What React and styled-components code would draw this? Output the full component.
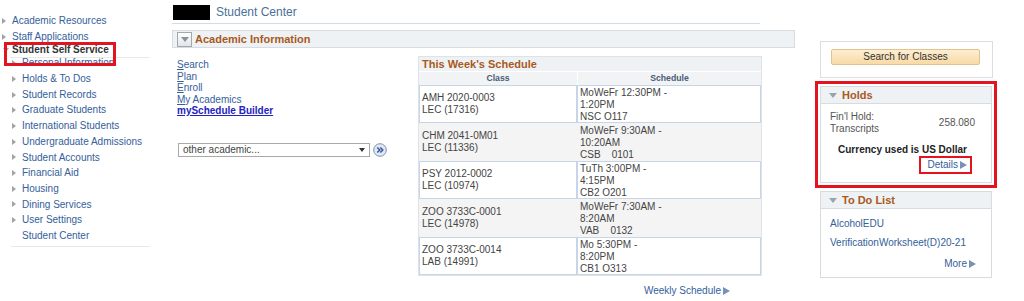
import React from 'react'
import styled, { createGlobalStyle } from 'styled-components'

const LINK = '#34609a'
const ORANGE = '#a9591c'
const RED = '#e3141f'

const GlobalStyle = createGlobalStyle`
  html, body { margin: 0; padding: 0; background: #fff; }
  body {
    font-family: "Liberation Sans", Arial, sans-serif;
    font-size: 10px;
    color: #333;
  }
  * { box-sizing: border-box; }
`

const Page = styled.div`
  display: flex;
  align-items: flex-start;
  width: 1024px;
  height: 301px;
  overflow: hidden;
`

/* ---------- left menu ---------- */

const Nav = styled.nav`
  width: 160px;
  padding-top: 13px;
`

const NavItem = styled.div`
  display: flex;
  align-items: center;
  height: 15.7px;
  line-height: 15.7px;
  padding-left: ${p => (p.$sub ? 12 : 2)}px;
  color: ${LINK};
  white-space: nowrap;
`

const RightTri = styled.span`
  width: 0;
  height: 0;
  margin-right: 6px;
  border-left: 4px solid #a3a3a3;
  border-top: 3.5px solid transparent;
  border-bottom: 3.5px solid transparent;
  visibility: ${p => (p.$hidden ? 'hidden' : 'visible')};
`

const SelfService = styled.div`
  position: relative;
  display: flex;
  align-items: center;
  height: 11px;
  line-height: 15.7px;
  padding-left: 3px;
  font-weight: bold;
  color: #333;
  white-space: nowrap;

  &::before {
    content: '';
    position: absolute;
    left: 10px;
    right: 10px;
    top: 13px;
    border-top: 1px solid #e9e9e9;
  }
  &::after {
    content: '';
    position: absolute;
    left: 4px;
    top: -2px;
    width: 106px;
    height: 18px;
    border: 3px solid ${RED};
  }
`

const DownTri = styled.span`
  width: 0;
  height: 0;
  margin-right: 3px;
  margin-top: 1px;
  border-top: 4px solid #a3a3a3;
  border-left: 3.5px solid transparent;
  border-right: 3.5px solid transparent;
`

const NavRule = styled.div`
  margin: 2px 10px 0 11px;
  border-top: 1px solid #e8e8e8;
`

/* ---------- main column ---------- */

const Main = styled.main`
  width: 623px;
  margin-left: 12px;
  padding-top: 5px;
`

const TitleRow = styled.div`
  display: flex;
  align-items: center;
  gap: 6px;
  height: 15px;
  padding-left: 1px;
`

const Redacted = styled.span`
  width: 37px;
  height: 15px;
  background: #000;
`

const PageTitle = styled.h1`
  margin: 0;
  font-size: 12px;
  font-weight: normal;
  line-height: 15px;
  color: #4d6f96;
`

const TitleRule = styled.div`
  width: 588px;
  height: 1px;
  margin-top: 3px;
  background: #d8dbde;
`

const SectionBar = styled.div`
  display: flex;
  align-items: center;
  gap: 3px;
  height: 18px;
  margin-top: 6px;
  padding-left: 4px;
  border: 1px solid #d7dce0;
  background: #eef2f5;
`

const CollapseBox = styled.span`
  display: flex;
  align-items: center;
  justify-content: center;
  width: 15px;
  height: 15px;
  border: 1px solid #a2a8ae;
  background: linear-gradient(#ffffff, #e2e5e8);
`

const BoxTri = styled.span`
  width: 0;
  height: 0;
  border-top: 5px solid #8d9297;
  border-left: 4.5px solid transparent;
  border-right: 4.5px solid transparent;
`

const SectionTitle = styled.h2`
  margin: 0;
  font-size: 11px;
  font-weight: bold;
  color: ${ORANGE};
`

const ContentRow = styled.div`
  display: flex;
  margin-top: 8px;
`

const LinksCol = styled.div`
  width: 246px;
  padding: 3px 0 0 5px;
`

const QuickLink = styled.a`
  display: block;
  line-height: 11.5px;
  color: ${p => (p.$strong ? '#2323bd' : LINK)};
  font-weight: ${p => (p.$strong ? 'bold' : 'normal')};
  text-decoration: ${p => (p.$strong ? 'underline' : 'none')};
  u { text-decoration: underline; }
`

const DropRow = styled.div`
  display: flex;
  align-items: center;
  gap: 3px;
  margin: 26px 0 0 1px;
`

const FakeSelect = styled.div`
  display: flex;
  align-items: center;
  justify-content: space-between;
  width: 192px;
  height: 14px;
  padding: 0 4px;
  border: 1px solid #a9a9a9;
  color: #444;
`

const SelectArrow = styled.span`
  width: 0;
  height: 0;
  border-top: 4px solid #333;
  border-left: 3px solid transparent;
  border-right: 3px solid transparent;
`

const ScheduleCol = styled.div`
  width: 344px;
`

const ScheduleBox = styled.div`
  border: 1px solid #dfe3e6;
`

const ScheduleTitle = styled.h3`
  margin: 0;
  height: 14px;
  padding-left: 3px;
  line-height: 14px;
  font-size: 11px;
  font-weight: bold;
  color: ${ORANGE};
  background: #eff2f4;
`

const Grid = styled.div`
  display: grid;
  grid-template-columns: 158px 184px;
`

const ColHead = styled.div`
  height: 14px;
  line-height: 13px;
  text-align: center;
  font-size: 8.7px;
  font-weight: bold;
  color: #4b5d73;
  background: #f1f3f5;
  border-top: 1px solid #fff;
  border-left: ${p => (p.$first ? 'none' : '1px solid #fff')};
`

const Cell = styled.div`
  height: 38px;
  line-height: 12px;
  color: #444;
  background: ${p => (p.$alt ? '#f4f4f4' : '#fff')};
  border: 1px solid ${p => (p.$alt ? '#f4f4f4' : '#c6d6e8')};
`

const ClassCell = styled(Cell)`
  display: flex;
  flex-direction: column;
  justify-content: center;
  padding: 0 2px;
`

const TimeCell = styled(Cell)`
  padding: 1px 2px 0;
`

const MoreRow = styled.div`
  display: flex;
  justify-content: flex-end;
  padding-right: ${p => p.$pad || 0}px;
  margin-top: ${p => p.$top || 0}px;
  line-height: ${p => p.$lh || 12}px;
`

const ArrowLink = styled.a`
  display: inline-flex;
  align-items: center;
  gap: 2px;
  color: ${LINK};
  text-decoration: none;
`

const BlueTri = styled.span`
  width: 0;
  height: 0;
  border-left: 7px solid #7a90b6;
  border-top: 4.5px solid transparent;
  border-bottom: 4.5px solid transparent;
`

/* ---------- right column ---------- */

const Side = styled.aside`
  width: 182px;
  margin-left: 20px;
  padding-top: 41px;
`

const SearchBox = styled.div`
  width: 173px;
  height: 37px;
  margin-left: 5px;
  padding: 7px 0 0 10px;
  border: 1px solid #dadee1;
`

const SearchButton = styled.button`
  width: 149px;
  height: 16px;
  padding: 0;
  border: 1px solid #e2c38c;
  border-radius: 2px;
  background: linear-gradient(#fdeed2, #f8daa5);
  font-family: inherit;
  font-size: 10px;
  line-height: 14px;
  color: #333;
`

const Highlight = styled.div`
  margin-top: 3px;
  padding: 2px;
  border: 3px solid ${RED};
`

const Pagelet = styled.section`
  width: 172px;
  margin-left: ${p => p.$inset || 0}px;
  margin-top: ${p => p.$top || 0}px;
  border: 1px solid #d7dce0;
  background: #fff;
`

const PageletHead = styled.div`
  display: flex;
  align-items: center;
  gap: 5px;
  height: 17px;
  padding-left: 8px;
  background: #eef2f5;
  border-bottom: 1px solid #d7dce0;
`

const HeadTri = styled.span`
  width: 0;
  height: 0;
  border-top: 5px solid #9ca3aa;
  border-left: 4.5px solid transparent;
  border-right: 4.5px solid transparent;
`

const PageletTitle = styled.h4`
  margin: 0;
  font-size: 11px;
  font-weight: bold;
  color: ${ORANGE};
`

const HoldsBody = styled.div`
  padding: 7px 16px 8px 9px;
`

const HoldRow = styled.div`
  display: flex;
  align-items: center;
  justify-content: space-between;
  line-height: 12px;
  color: #555;
`

const Currency = styled.div`
  margin-top: 9px;
  line-height: 12px;
  text-align: center;
  font-weight: bold;
  color: #222;
`

const DetailsBox = styled.div`
  display: flex;
  align-items: center;
  height: 18px;
  margin-right: 3px;
  padding: 0 3px 0 6px;
  border: 2px solid ${RED};
`

const TodoBody = styled.div`
  padding: 8px 15px 6px 9px;
`

const TodoLink = styled.a`
  display: block;
  line-height: 14px;
  margin-bottom: 5px;
  color: ${LINK};
  text-decoration: none;
`

const GoIcon = () => (
  <svg width="14" height="14" viewBox="0 0 14 14">
    <circle cx="7" cy="7" r="6.3" fill="#e1e8f4" stroke="#7d90b6" strokeWidth="1" />
    <path d="M4.3 4.4 L6.8 7 L4.3 9.6 M7.3 4.4 L9.8 7 L7.3 9.6" fill="none" stroke="#34569a" strokeWidth="1.5" />
  </svg>
)

const topItems = ['Academic Resources', 'Staff Applications']
const subItems = [
  'Personal Information',
  'Holds & To Dos',
  'Student Records',
  'Graduate Students',
  'International Students',
  'Undergraduate Admissions',
  'Student Accounts',
  'Financial Aid',
  'Housing',
  'Dining Services',
  'User Settings',
]

const schedule = [
  { cls: ['AMH 2020-0003', 'LEC (17316)'], time: ['MoWeFr 12:30PM -', '1:20PM', 'NSC O117'] },
  { cls: ['CHM 2041-0M01', 'LEC (11336)'], time: ['MoWeFr 9:30AM -', '10:20AM', 'CSB\u00a0\u00a0\u00a0\u00a00101'] },
  { cls: ['PSY 2012-0002', 'LEC (10974)'], time: ['TuTh 3:00PM -', '4:15PM', 'CB2 O201'] },
  { cls: ['ZOO 3733C-0001', 'LEC (14978)'], time: ['MoWeFr 7:30AM -', '8:20AM', 'VAB\u00a0\u00a0\u00a0\u00a00132'] },
  { cls: ['ZOO 3733C-0014', 'LAB (14991)'], time: ['Mo 5:30PM -', '8:20PM', 'CB1 O313'] },
]

export default function App() {
  return (
    <Page>
      <GlobalStyle />
      <Nav>
        {topItems.map(t => (
          <NavItem key={t}>
            <RightTri />
            {t}
          </NavItem>
        ))}
        <SelfService>
          <DownTri />
          Student Self Service
        </SelfService>
        {subItems.map(t => (
          <NavItem $sub key={t}>
            <RightTri />
            {t}
          </NavItem>
        ))}
        <NavItem $sub>
          <RightTri $hidden />
          Student Center
        </NavItem>
        <NavRule />
      </Nav>

      <Main>
        <TitleRow>
          <Redacted />
          <PageTitle>Student Center</PageTitle>
        </TitleRow>
        <TitleRule />
        <SectionBar>
          <CollapseBox><BoxTri /></CollapseBox>
          <SectionTitle>Academic Information</SectionTitle>
        </SectionBar>

        <ContentRow>
          <LinksCol>
            <QuickLink><u>S</u>earch</QuickLink>
            <QuickLink><u>P</u>lan</QuickLink>
            <QuickLink><u>E</u>nroll</QuickLink>
            <QuickLink><u>M</u>y Academics</QuickLink>
            <QuickLink $strong>mySchedule Builder</QuickLink>
            <DropRow>
              <FakeSelect>
                <span>other academic...</span>
                <SelectArrow />
              </FakeSelect>
              <GoIcon />
            </DropRow>
          </LinksCol>

          <ScheduleCol>
            <ScheduleBox>
              <ScheduleTitle>This Week's Schedule</ScheduleTitle>
              <Grid>
                <ColHead $first>Class</ColHead>
                <ColHead>Schedule</ColHead>
                {schedule.map((row, i) => (
                  <React.Fragment key={row.cls[0]}>
                    <ClassCell $alt={i % 2 === 1}>
                      {row.cls.map(l => <div key={l}>{l}</div>)}
                    </ClassCell>
                    <TimeCell $alt={i % 2 === 1}>
                      {row.time.map(l => <div key={l}>{l}</div>)}
                    </TimeCell>
                  </React.Fragment>
                ))}
              </Grid>
            </ScheduleBox>
            <MoreRow $pad={32} $top={9}>
              <ArrowLink>Weekly Schedule <BlueTri /></ArrowLink>
            </MoreRow>
          </ScheduleCol>
        </ContentRow>
      </Main>

      <Side>
        <SearchBox>
          <SearchButton>Search for Classes</SearchButton>
        </SearchBox>

        <Highlight>
          <Pagelet>
            <PageletHead>
              <HeadTri />
              <PageletTitle>Holds</PageletTitle>
            </PageletHead>
            <HoldsBody>
              <HoldRow>
                <div>
                  <div>Fin'l Hold:</div>
                  <div>Transcripts</div>
                </div>
                <span>258.080</span>
              </HoldRow>
              <Currency>Currency used is US Dollar</Currency>
              <MoreRow>
                <DetailsBox>
                  <ArrowLink>Details <BlueTri /></ArrowLink>
                </DetailsBox>
              </MoreRow>
            </HoldsBody>
          </Pagelet>
        </Highlight>

        <Pagelet $inset={5} $top={3}>
          <PageletHead>
            <HeadTri />
            <PageletTitle>To Do List</PageletTitle>
          </PageletHead>
          <TodoBody>
            <TodoLink>AlcoholEDU</TodoLink>
            <TodoLink>VerificationWorksheet(D)20-21</TodoLink>
            <MoreRow $top={7} $lh={14}>
              <ArrowLink>More <BlueTri /></ArrowLink>
            </MoreRow>
          </TodoBody>
        </Pagelet>
      </Side>
    </Page>
  )
}
